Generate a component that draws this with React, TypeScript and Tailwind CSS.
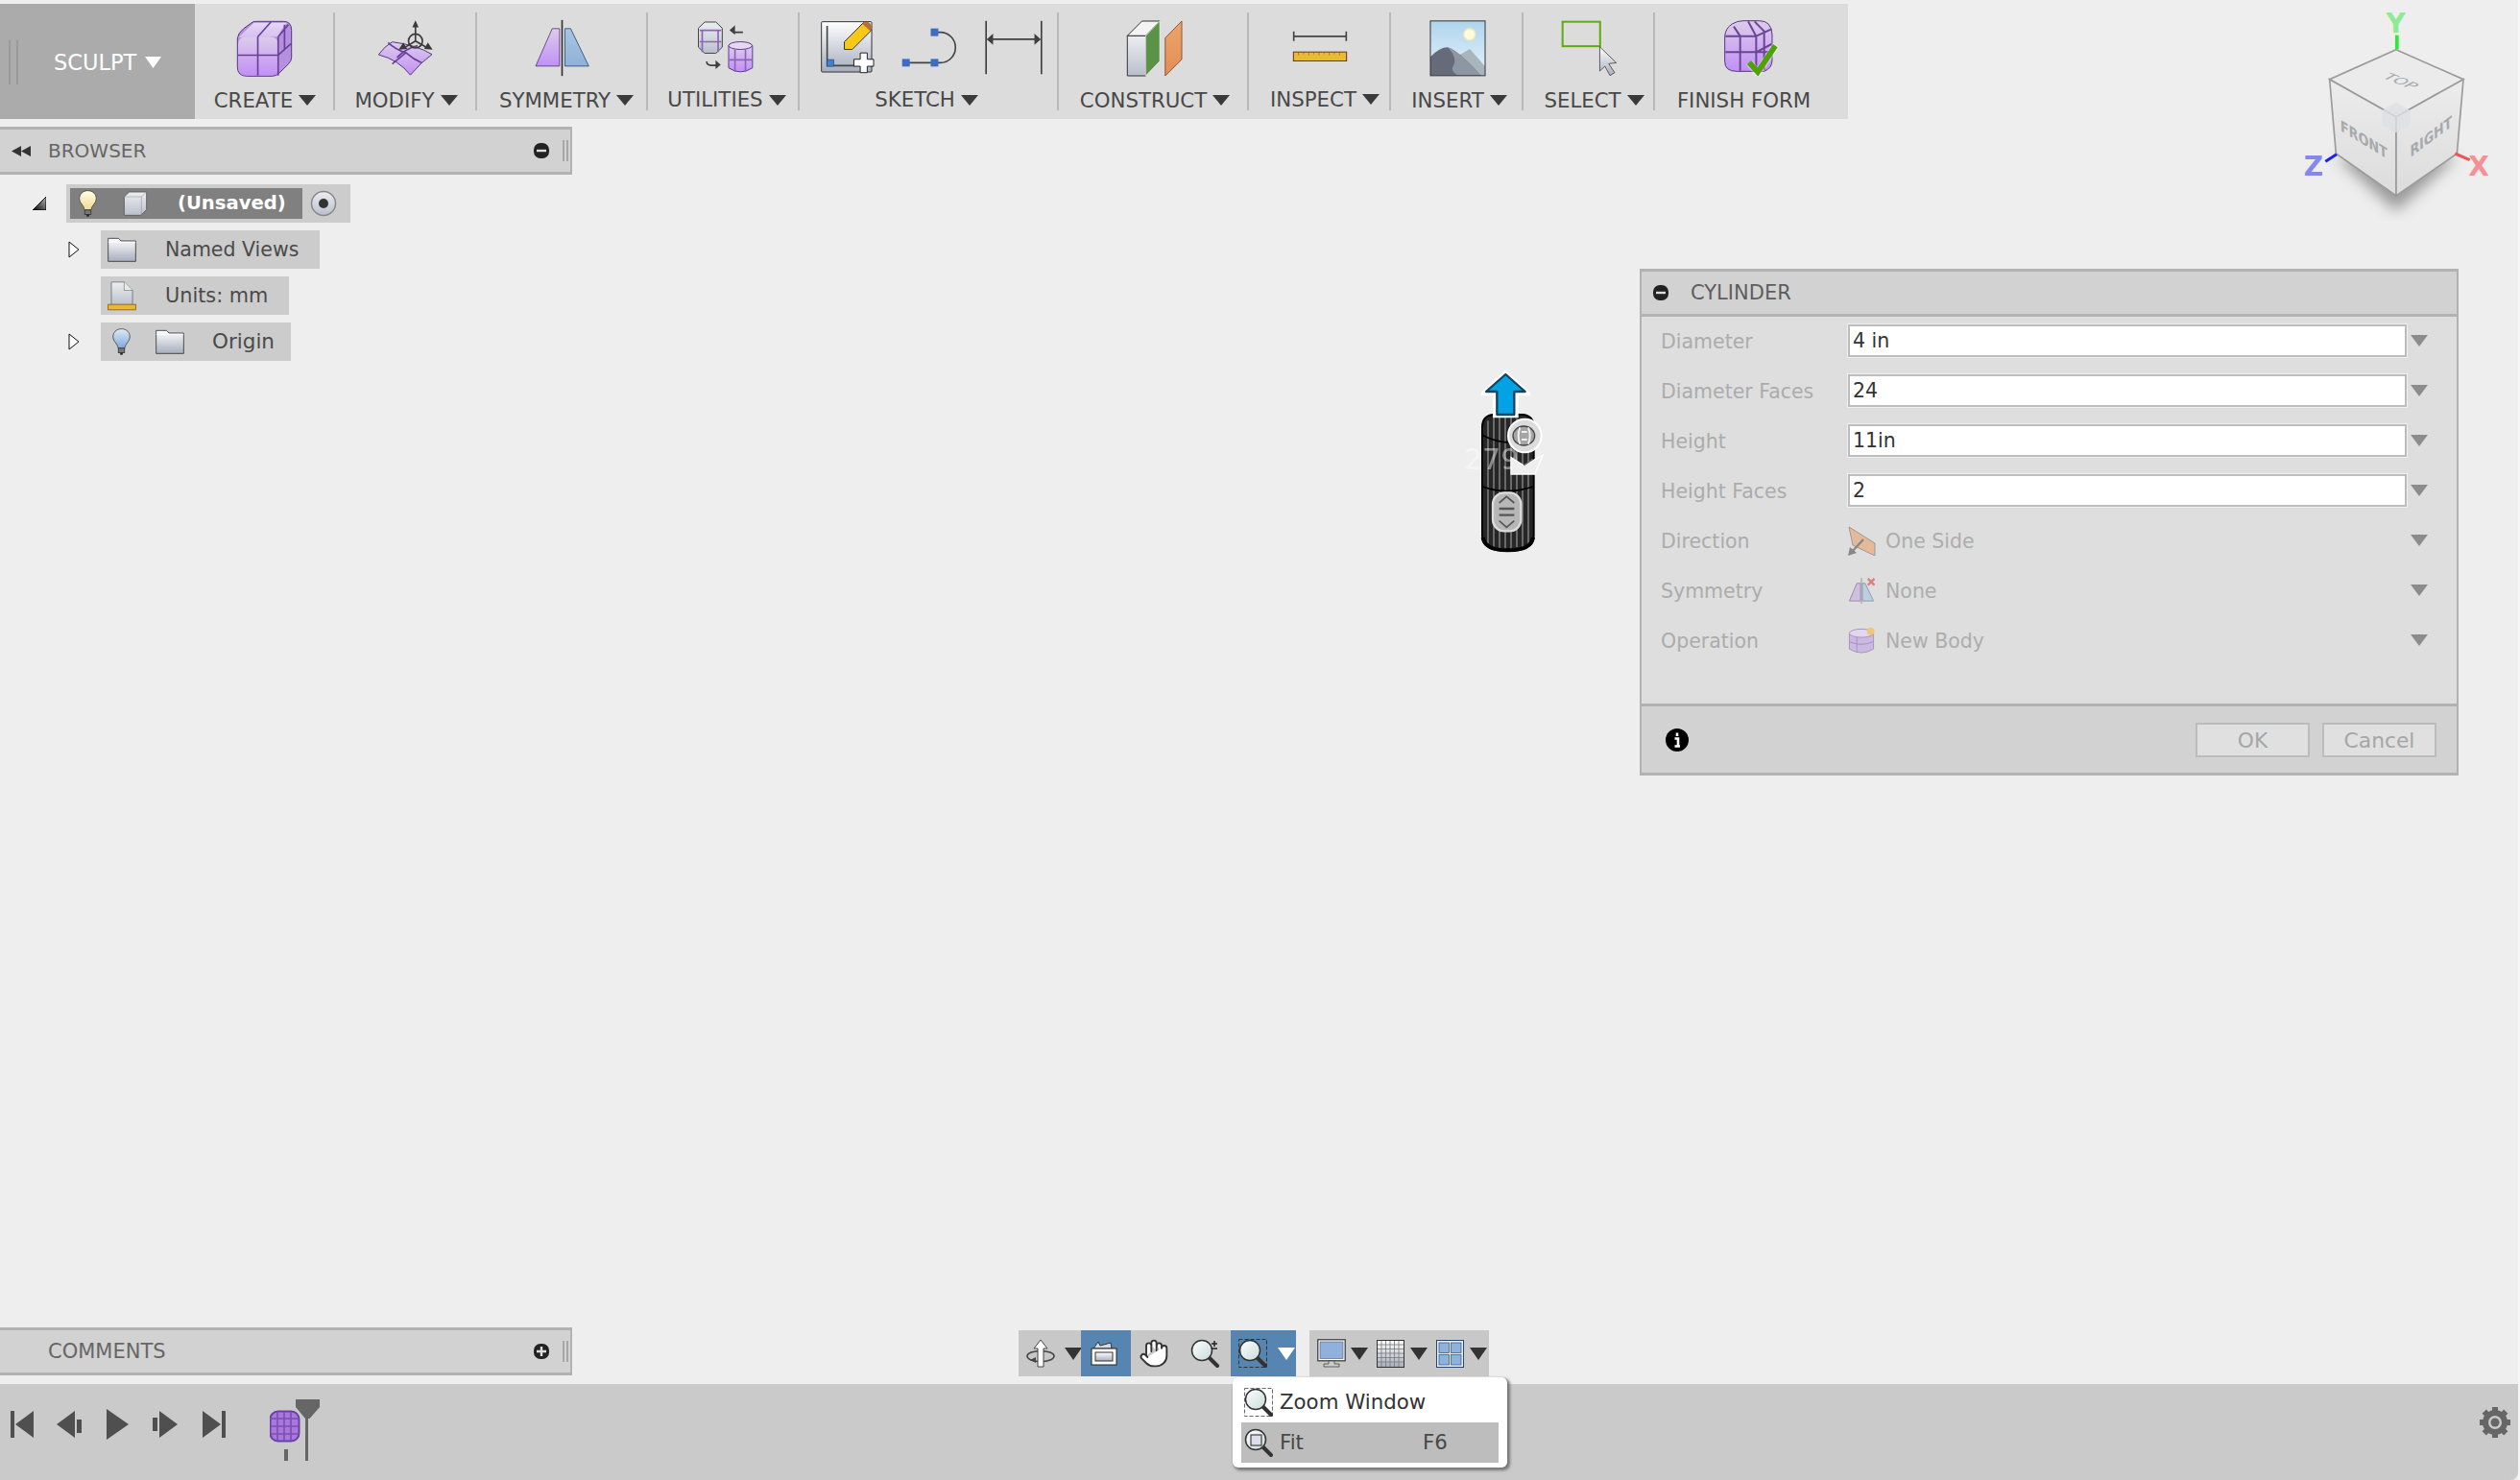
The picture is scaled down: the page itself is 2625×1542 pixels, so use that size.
import React from "react";
import { Hand } from "lucide-react";

const Tri = ({ c = "#3a3a3a", w = 18, h = 11 }: { c?: string; w?: number; h?: number }) => (
  <svg width={w} height={h} viewBox={`0 0 ${w} ${h}`} className="shrink-0">
    <path d={`M0 0H${w}L${w / 2} ${h}Z`} fill={c} />
  </svg>
);

const Ic = ({ vb, w, h, children, className }: { vb: string; w: number; h: number; children: React.ReactNode; className?: string }) => (
  <svg viewBox={vb} width={w} height={h} className={"shrink-0 " + (className ?? "")}>
    {children}
  </svg>
);

const Defs = () => (
  <svg className="absolute w-0 h-0">
    <defs>
      <linearGradient id="lil" x1="0" y1="0" x2="0" y2="1"><stop offset="0" stopColor="#dccdea" /><stop offset="1" stopColor="#c28ff6" /></linearGradient>
      <linearGradient id="lilTop" x1="0" y1="0" x2="0" y2="1"><stop offset="0" stopColor="#e5d8f5" /><stop offset="1" stopColor="#d5bff0" /></linearGradient>
      <linearGradient id="blu" x1="0" y1="0" x2="0" y2="1"><stop offset="0" stopColor="#a9c4e2" /><stop offset="1" stopColor="#8fb1d8" /></linearGradient>
      <linearGradient id="sil" x1="0" y1="0" x2="0" y2="1"><stop offset="0" stopColor="#ffffff" /><stop offset="1" stopColor="#a6adbd" /></linearGradient>
      <linearGradient id="sil2" x1="0" y1="0" x2="0" y2="1"><stop offset="0" stopColor="#eceef1" /><stop offset="1" stopColor="#b9bfcb" /></linearGradient>
      <linearGradient id="sky" x1="0" y1="0" x2="0" y2="1"><stop offset="0" stopColor="#aed5ee" /><stop offset="1" stopColor="#e6f2f9" /></linearGradient>
      <linearGradient id="org" x1="0" y1="0" x2="0" y2="1"><stop offset="0" stopColor="#eba56c" /><stop offset="1" stopColor="#e28f55" /></linearGradient>
      <linearGradient id="yb" x1="0" y1="0" x2="0" y2="1"><stop offset="0" stopColor="#fffde9" /><stop offset="1" stopColor="#f3d98e" /></linearGradient>
      <linearGradient id="bb" x1="0" y1="0" x2="0" y2="1"><stop offset="0" stopColor="#dfeaf7" /><stop offset="1" stopColor="#7ea9da" /></linearGradient>
      <linearGradient id="glass" x1="0" y1="0" x2="1" y2="1"><stop offset="0" stopColor="#ffffff" /><stop offset="1" stopColor="#c5dcd8" /></linearGradient>
      <linearGradient id="open" x1="0" y1="1" x2="1" y2="0"><stop offset="0" stopColor="#000000" /><stop offset="1" stopColor="#bbbbbb" /></linearGradient>
      <linearGradient id="cubeL" x1="0" y1="0" x2="0" y2="1"><stop offset="0" stopColor="#ececec" /><stop offset="1" stopColor="#dcdcdc" /></linearGradient>
      <filter id="blur" x="-40%" y="-60%" width="180%" height="220%"><feGaussianBlur stdDeviation="22" /></filter>
    </defs>
  </svg>
);

const CreateIcon = () => (
  <Ic vb="136 48 178 178" w={59} h={59}>
    <path d="M140 105Q142 88 160 74L188 54Q192 52 202 52H285Q310 52 310 80V165Q310 176 300 186L272 214Q262 224 250 224H170Q140 224 140 195Z" fill="#b58fe0" stroke="#54367f" strokeWidth="3" />
    <path d="M143 102L192 56H296Q274 80 268 100Z" fill="url(#lilTop)" />
    <path d="M142 125Q142 100 170 100H240Q268 100 268 125V195Q268 222 240 222H170Q142 222 142 195Z" fill="url(#lil)" />
    <path d="M204 100V222M142 158H268M204 100L245 54M268 158L308 122M268 100L300 62M268 100V222M288 62V140" stroke="#6a3f98" strokeWidth="5" fill="none" />
  </Ic>
);

const ModifyIcon = () => (
  <Ic vb="578 45 178 180" w={59} h={60}>
    <path d="M582 156Q600 130 625 116Q700 125 750 155Q715 180 682 220Q645 172 582 156Z" fill="url(#lil)" stroke="#54367f" strokeWidth="3" />
    <path d="M612 118Q635 140 668 150Q690 170 718 182M705 128Q670 135 640 165M668 150L625 185" stroke="#6a3f98" strokeWidth="5" fill="none" />
    <circle cx="698" cy="113" r="22" fill="none" stroke="#3a3a3a" strokeWidth="5" />
    <path d="M698 113V65M698 113L665 133M698 113L732 133" stroke="#3a3a3a" strokeWidth="5" />
    <path d="M698 48L688 70H708ZM645 140L672 138L660 118ZM752 140L725 138L737 118Z" fill="#3a3a3a" />
  </Ic>
);

const SymmetryIcon = () => (
  <Ic vb="1075 48 172 180" w={57} h={60}>
    <path d="M1078 195L1130 77H1153V195Z" fill="url(#lil)" stroke="#54367f" strokeWidth="2.5" />
    <path d="M1170 77H1188L1245 195H1170Z" fill="url(#blu)" stroke="#2a4a70" strokeWidth="2.5" />
    <path d="M1161 50V226" stroke="#333" strokeWidth="5" />
  </Ic>
);

const UtilitiesIcon = () => (
  <Ic vb="76 50 180 172" w={60} h={57}>
    <path d="M80 75L100 56H135L155 75V135L135 154H100L80 135Z" fill="url(#sil2)" stroke="#444" strokeWidth="3" />
    <path d="M92 80V150M142 80V150M84 82H152M84 118H152" stroke="#8d63bd" strokeWidth="5" fill="none" />
    <path d="M175 130V200Q212 225 250 200V130Z" fill="url(#lil)" stroke="#5a3a8a" strokeWidth="3" />
    <ellipse cx="212" cy="130" rx="37" ry="12" fill="#e6d8f4" stroke="#5a3a8a" strokeWidth="3" />
    <path d="M195 143V212M228 143V212M176 175H250" stroke="#8d63bd" strokeWidth="5" fill="none" />
    <path d="M220 88H195Q188 88 188 78" stroke="#3f3f3f" strokeWidth="5" fill="none" />
    <path d="M178 82L195 66V96Z" fill="#3f3f3f" />
    <path d="M106 180Q106 192 120 192H136" stroke="#3f3f3f" strokeWidth="5" fill="none" />
    <path d="M150 190L134 176V204Z" fill="#3f3f3f" />
  </Ic>
);

const SketchNew = () => (
  <Ic vb="465 58 175 170" w={58} h={57}>
    <rect x="470" y="62" width="158" height="158" rx="3" fill="url(#sil)" stroke="#333" strokeWidth="3" />
    <path d="M488 75V200H575" stroke="#444" strokeWidth="5" fill="none" />
    <rect x="488" y="181" width="21" height="21" fill="#3c82d4" stroke="#2a4a70" strokeWidth="2" />
    <path d="M542 125L603 64L628 88L567 149H542Z" fill="#f8c818" stroke="#333" strokeWidth="3" />
    <path d="M598 68Q610 58 622 66Q632 76 624 92Z" fill="#b06f3c" />
    <path d="M592 160H614V180H634V202H614V222H592V202H572V180H592Z" fill="#fff" stroke="#222" strokeWidth="3" />
  </Ic>
);
const SketchLine = () => (
  <Ic vb="718 76 178 124" w={59} h={41}>
    <path d="M732 186H840A47 47 0 0 0 840 90H822" stroke="#444" strokeWidth="5" fill="none" />
    <rect x="720" y="174" width="24" height="24" fill="#3a6cc8" />
    <rect x="810" y="174" width="24" height="24" fill="#3a6cc8" />
    <rect x="810" y="78" width="24" height="24" fill="#3a6cc8" />
  </Ic>
);
const SketchDim = () => (
  <Ic vb="972 52 186 172" w={62} h={57}>
    <path d="M978 54V222M1152 54V222M995 112H1135" stroke="#404040" strokeWidth="5" fill="none" />
    <path d="M980 112L1000 94V130ZM1150 112L1130 94V130Z" fill="#404040" />
  </Ic>
);
const ConstructIcon = () => (
  <Ic vb="1420 50 178 176" w={59} h={59}>
    <path d="M1424 98H1482V224H1424Z" fill="url(#sil2)" stroke="#333" strokeWidth="3" />
    <path d="M1424 98L1470 52H1526L1482 98Z" fill="#f4f4f4" stroke="#333" strokeWidth="3" />
    <path d="M1482 98L1526 52V178L1482 224Z" fill="#5a9248" stroke="#fff" strokeWidth="2" />
    <path d="M1543 105L1595 52V172L1543 224Z" fill="url(#org)" stroke="#7c4320" strokeWidth="2.5" />
  </Ic>
);
const InspectIcon = () => (
  <Ic vb="438 88 174 98" w={58} h={33}>
    <path d="M443 90V120M607 90V120M443 105H607" stroke="#444" strokeWidth="5" fill="none" />
    <rect x="442" y="154" width="166" height="28" fill="#e8bc2e" stroke="#6e2e12" strokeWidth="3" />
    <path d="M458 155V164M474 155V161M490 155V164M506 155V161M522 155V164M538 155V161M554 155V164M570 155V161M586 155V164" stroke="#8a6420" strokeWidth="2" />
  </Ic>
);
const InsertIcon = () => (
  <Ic vb="868 50 178 177" w={59} h={59}>
    <rect x="871" y="52" width="172" height="172" fill="url(#sky)" />
    <circle cx="994" cy="94" r="18" fill="#fffbe0" stroke="#f6e9ad" strokeWidth="4" />
    <path d="M960 160L995 140L1043 195V224H1000Z" fill="#a9b5bd" />
    <path d="M871 165Q900 135 925 135Q960 145 1030 224H871Z" fill="#656b78" />
    <path d="M925 135Q960 145 1030 224H960Q930 210 945 190Q955 165 925 135Z" fill="#8f96a3" />
    <rect x="871" y="52" width="172" height="172" fill="none" stroke="#333" strokeWidth="3" />
  </Ic>
);
const SelectIcon = () => (
  <Ic vb="1282 50 178 178" w={59} h={59}>
    <rect x="1287" y="55" width="118" height="77" fill="none" stroke="#5caa0c" strokeWidth="6" />
    <path d="M1404 134L1456 184L1432 187L1451 215L1436 224L1420 195L1404 210Z" fill="url(#sil)" stroke="#444" strokeWidth="2.5" />
  </Ic>
);
const FinishIcon = () => (
  <Ic vb="0 0 171 174" w={57} h={58}>
    <path d="M2 50Q4 25 25 12Q40 2 60 2H110Q148 2 150 45V125Q150 150 125 160H40Q2 160 2 130Z" fill="url(#lil)" stroke="#54367f" strokeWidth="3" />
    <path d="M4 50H100V158M50 50V158M4 100H148M30 20L50 50M75 4L100 50M100 50L148 28M100 100L148 75M95 4L125 35V155" stroke="#6a4596" strokeWidth="6" fill="none" />
    <path d="M78 132L105 165L162 78" stroke="#fff" strokeWidth="24" fill="none" opacity="0.35" />
    <path d="M78 132L105 162L160 80" stroke="#4ea300" strokeWidth="17" fill="none" />
  </Ic>
);

const groups: { w: string; label: string; icon: React.ReactNode; sh: string; ish?: string }[] = [
  { w: "w-[146px]", label: "CREATE", icon: <CreateIcon />, sh: "ml-[2px]" },
  { w: "w-[148px]", label: "MODIFY", icon: <ModifyIcon />, sh: "ml-[2px]" },
  { w: "w-[178px]", label: "SYMMETRY", icon: <SymmetryIcon />, sh: "ml-[10px]" },
  { w: "w-[158px]", label: "UTILITIES", icon: <UtilitiesIcon />, sh: "ml-[8px]", ish: "ml-[6px]" },
  { w: "w-[270px]", label: "SKETCH", icon: <div className="flex items-center gap-[27px]"><SketchNew /><SketchLine /><SketchDim /></div>, sh: "mr-[4px]", ish: "ml-[6px]" },
  { w: "w-[198px]", label: "CONSTRUCT", icon: <ConstructIcon />, sh: "ml-[4px]", ish: "ml-[2px]" },
  { w: "w-[148px]", label: "INSPECT", icon: <InspectIcon />, sh: "ml-[12px]", ish: "ml-[2px]" },
  { w: "w-[138px]", label: "INSERT", icon: <InsertIcon />, sh: "ml-[6px]", ish: "ml-[2px]" },
  { w: "w-[137px]", label: "SELECT", icon: <SelectIcon />, sh: "ml-[12px]", ish: "ml-[2px]" },
];

const Toolbar = () => (
  <div className="mt-1 flex h-[120px] w-[1925px] bg-[#dcdcdc]">
    <div className="flex w-[203px] shrink-0 items-center bg-[#ababab]">
      <div className="ml-[9px] mt-[2px] h-[46px] w-[10px] border-x-2 border-[#999999]" />
      <span className="ml-[37px] mt-[2px] text-[22.5px] leading-none text-white">SCULPT</span>
      <div className="ml-[9px] mt-[2px]"><Tri c="#ffffff" w={17} h={12} /></div>
    </div>
    {groups.map((g) => (
      <div key={g.label} className={`${g.w} mt-[9px] flex h-[102px] shrink-0 flex-col items-center border-r-2 border-[#b9b9b9] pt-2`}>
        <div className={`${g.ish ?? ""} flex h-[58px] items-center`}>{g.icon}</div>
        <div className={`${g.sh} mt-[15px] flex h-6 items-center gap-[6px] text-[21.3px] leading-none text-[#484848]`}>
          <span>{g.label}</span>
          <Tri />
        </div>
      </div>
    ))}
    <div className="mt-[9px] flex h-[102px] flex-1 flex-col items-center pt-2">
      <div className="flex h-[58px] items-center"><FinishIcon /></div>
      <div className="mr-[16px] mt-[15px] flex h-6 items-center text-[21.3px] leading-none text-[#484848]">FINISH FORM</div>
    </div>
  </div>
);

const Pill = ({ plus }: { plus?: boolean }) => (
  <svg width="16" height="16" viewBox="0 0 16 16" className="shrink-0">
    <rect x="0" y="0" width="16" height="16" rx="7" fill="#222" />
    <path d={plus ? "M3 8H13M8 3V13" : "M3 8H13"} stroke="#ddd" strokeWidth="2.4" />
  </svg>
);

const Grip = () => <div className="h-[22px] w-[6px] border-x-2 border-[#a8a8a8]" />;

const PanelHeader = ({ title, left, plus, size }: { title: string; left?: boolean; plus?: boolean; size: string }) => (
  <div className="flex h-[50px] w-[596px] items-center border-y-[3px] border-r-2 border-[#b2b2b2] bg-[#d2d2d2]">
    <div className="flex w-[50px] shrink-0 justify-center pr-[6px]">
      {left && (
        <svg width="20" height="11" viewBox="0 0 20 11"><path d="M0 5.5L10 0V11ZM10 5.5L20 0V11Z" fill="#333" /></svg>
      )}
    </div>
    <span className={`${size} leading-none text-[#666666]`}>{title}</span>
    <div className="ml-auto flex items-center gap-[14px] pr-[2px]">
      <Pill plus={plus} />
      <Grip />
    </div>
  </div>
);

const Bulb = ({ id }: { id: string }) => (
  <Ic vb="3 0 54 86" w={19} h={28}>
    <path d="M30 2C13 2 3 14 3 28C3 42 17 48 20 64H40C43 48 57 42 57 28C57 14 47 2 30 2Z" fill={`url(#${id})`} stroke="#444" strokeWidth="2.5" />
    <rect x="20" y="64" width="20" height="14" fill="#777" stroke="#333" strokeWidth="2.5" />
    <rect x="26" y="78" width="8" height="7" fill="#222" />
  </Ic>
);
const TreeCube = () => (
  <Ic vb="0 0 78 78" w={26} h={26}>
    <path d="M4 20Q4 18 6 16L20 3H74V58L58 74Q56 76 54 76H6Q4 76 4 74Z" fill="url(#sil2)" stroke="#555" strokeWidth="2.5" />
    <path d="M4 18H58V75M58 18L74 3" stroke="#888" strokeWidth="1.5" fill="none" />
  </Ic>
);
const Folder = () => (
  <Ic vb="0 0 90 78" w={30} h={26}>
    <path d="M2 76V4H34L42 12H88V76Z" fill="url(#sil)" stroke="#333" strokeWidth="2.5" />
    <path d="M2 16H88" stroke="#fff" strokeWidth="2" />
  </Ic>
);
const PageIcon = () => (
  <Ic vb="0 0 90 92" w={30} h={31}>
    <path d="M12 2H52L78 28V76H12Z" fill="url(#sil2)" stroke="#555" strokeWidth="2" />
    <path d="M52 2V28H78" fill="#e8e8e8" stroke="#777" strokeWidth="2" />
    <rect x="2" y="72" width="86" height="17" fill="#e9b732" stroke="#8a5a10" strokeWidth="2.5" />
  </Ic>
);
const Disc = () => (
  <Ic vb="0 0 36 54" w={12} h={18}>
    <path d="M3 3L33 27L3 51Z" fill="#fff" stroke="#111" strokeWidth="3" />
  </Ic>
);

const Row = ({ w, children }: { w: string; children: React.ReactNode }) => (
  <div className={`${w} flex h-10 items-center bg-[#cccccc] leading-none text-[#4a4a4a]`}>{children}</div>
);

const Browser = () => (
  <div>
    <PanelHeader title="BROWSER" left size="text-[20px]" />
    <div className="mt-[10px] flex flex-col gap-2">
      <div className="flex items-center">
        <div className="flex w-[69px] justify-end pr-[21px]">
          <svg width="14" height="14" viewBox="0 0 14 14"><path d="M0 14H14V0Z" fill="url(#open)" stroke="#000" strokeWidth="1" /></svg>
        </div>
        <div className="flex h-10 w-[296px] items-center bg-[#cccccc] pl-1">
          <div className="flex h-8 w-[242px] items-center bg-[#808080] pl-[9px]">
            <Bulb id="yb" />
            <div className="ml-[27px]"><TreeCube /></div>
            <span className="ml-[31px] text-[19.6px] font-bold leading-none text-white">(Unsaved)</span>
          </div>
          <svg width="28" height="28" viewBox="0 0 28 28" className="ml-2">
            <circle cx="14" cy="14" r="12.5" fill="url(#sil2)" stroke="#888" strokeWidth="1.5" />
            <circle cx="14" cy="14" r="5" fill="#333" />
          </svg>
        </div>
      </div>
      <div className="flex items-center">
        <div className="flex w-[105px] pl-[71px]"><Disc /></div>
        <Row w="w-[228px]">
          <div className="ml-[7px]"><Folder /></div>
          <span className="ml-[30px] text-[20.5px]">Named Views</span>
        </Row>
      </div>
      <div className="flex items-center">
        <div className="w-[105px]" />
        <Row w="w-[196px]">
          <div className="ml-[7px]"><PageIcon /></div>
          <span className="ml-[30px] text-[20.8px]">Units: mm</span>
        </Row>
      </div>
      <div className="flex items-center">
        <div className="flex w-[105px] pl-[71px]"><Disc /></div>
        <Row w="w-[198px]">
          <div className="ml-3"><Bulb id="bb" /></div>
          <div className="ml-[26px]"><Folder /></div>
          <span className="ml-[29px] text-[21.5px]">Origin</span>
        </Row>
      </div>
    </div>
  </div>
);

const Lens = ({ inner }: { inner?: React.ReactNode }) => (
  <>
    <path d="M19 19L28 28" stroke="#333" strokeWidth="4" strokeLinecap="round" />
    <circle cx="12" cy="12" r="10.5" fill="url(#glass)" stroke="#333" strokeWidth="1.5" />
    {inner}
  </>
);

const NavTri = ({ white }: { white?: boolean }) => <Tri c={white ? "#ffffff" : "#333333"} w={18} h={13} />;

const ZoomMenu = () => (
  <div className="absolute left-[223px] top-[49px] z-10 h-[94px] w-[286px] rounded-[6px] bg-white px-[9px] pt-[5px] text-[21.3px] leading-none shadow-[2px_2px_3px_1px_#777777]">
    <div className="flex h-[42px] items-center text-[#333333]">
      <Ic vb="0 0 30 30" w={30} h={30} className="ml-[3px]">
        <rect x="0.5" y="0.5" width="29" height="29" fill="none" stroke="#666" strokeDasharray="4 2" />
        <Lens />
      </Ic>
      <span className="ml-[7px]">Zoom Window</span>
    </div>
    <div className="flex h-[42px] items-center bg-[#bdbdbd] text-[#484848]">
      <Ic vb="0 0 30 30" w={30} h={30} className="ml-[3px]">
        <Lens inner={<rect x="7" y="7" width="11" height="11" fill="#dde" stroke="#444" strokeWidth="1.2" />} />
      </Ic>
      <span className="ml-[7px]">Fit</span>
      <span className="ml-[124px]">F6</span>
    </div>
  </div>
);

const NavBar = () => (
  <div className="relative ml-[465px] flex items-stretch gap-[14px]">
    <div className="flex h-12 w-[289px] bg-[#c8c8c8]">
      <div className="flex w-[65px] items-center pl-2">
        <Ic vb="0 0 30 30" w={30} h={30}>
          <ellipse cx="15" cy="18" rx="14" ry="5.5" fill="none" stroke="#444" strokeWidth="1.6" />
          <path d="M15 1L22 10H18V29H12V10H8Z" fill="#fff" stroke="#444" strokeWidth="1" />
          <path d="M4 22L10 19V25Z" fill="#444" />
        </Ic>
        <div className="ml-[10px]"><NavTri /></div>
      </div>
      <div className="flex w-[52px] items-center justify-center bg-[#5585b0]">
        <Ic vb="0 0 28 26" w={28} h={26} className="mr-[4px]">
          <path d="M3 8L8 1L10 5L21 2L22 8Z" fill="#d7dbe2" stroke="#333" strokeWidth="1" />
          <rect x="1" y="8" width="26" height="17" fill="#fff" stroke="#222" strokeWidth="1" />
          <rect x="5" y="12" width="18" height="9" fill="url(#sil)" stroke="#333" strokeWidth="1" />
        </Ic>
      </div>
      <div className="flex w-[52px] items-center justify-center pr-1">
        <Hand size={32} fill="#ffffff" stroke="#333333" strokeWidth={1.4} />
      </div>
      <div className="flex w-[52px] items-center justify-center">
        <Ic vb="0 0 32 30" w={32} h={30}>
          <Lens />
          <path d="M25 2V8M22 5H28M22 10H28" stroke="#222" strokeWidth="1.5" />
        </Ic>
      </div>
      <div className="flex w-[68px] items-center bg-[#5585b0] pl-2">
        <Ic vb="0 0 30 30" w={30} h={30}>
          <rect x="0.5" y="0.5" width="29" height="29" fill="none" stroke="#333" strokeDasharray="4 2" />
          <Lens />
        </Ic>
        <div className="ml-[11px]"><NavTri white /></div>
      </div>
    </div>
    <div className="flex h-12 w-[187px] items-center bg-[#c8c8c8] pl-2">
      <Ic vb="0 0 30 30" w={30} h={30}>
        <rect x="0.8" y="0.8" width="28.4" height="22" fill="#fff" stroke="#333" strokeWidth="1.2" />
        <rect x="3" y="3" width="24" height="17.5" fill="#8fb1de" stroke="#556" strokeWidth="0.6" />
        <path d="M12 23H18V26H23V29H7V26H12Z" fill="#ccc" stroke="#444" strokeWidth="0.8" />
      </Ic>
      <div className="ml-[5px]"><NavTri /></div>
      <Ic vb="0 0 29 29" w={29} h={29} className="ml-[9px]">
        <rect x="0.5" y="0.5" width="28" height="28" fill="url(#sil)" stroke="#333" />
        <path d="M5 1V28M9.5 1V28M14 1V28M18.5 1V28M23 1V28M1 5H28M1 9.5H28M1 14H28M1 18.5H28M1 23H28" stroke="#777" strokeWidth="0.8" />
      </Ic>
      <div className="ml-[6px]"><NavTri /></div>
      <Ic vb="0 0 29 29" w={29} h={29} className="ml-[9px]">
        <rect x="0.5" y="0.5" width="28" height="28" fill="#e9eef6" stroke="#28456e" />
        <rect x="3" y="3" width="10.5" height="10.5" fill="#8db2de" stroke="#3b5c8c" strokeWidth="0.8" />
        <rect x="15.5" y="3" width="10.5" height="10.5" fill="#8db2de" stroke="#3b5c8c" strokeWidth="0.8" />
        <rect x="3" y="15.5" width="10.5" height="10.5" fill="#8db2de" stroke="#3b5c8c" strokeWidth="0.8" />
        <rect x="15.5" y="15.5" width="10.5" height="10.5" fill="#8db2de" stroke="#3b5c8c" strokeWidth="0.8" />
      </Ic>
      <div className="ml-[6px]"><NavTri /></div>
    </div>
    <ZoomMenu />
  </div>
);

const Caret = () => <Tri c="#8c8c8c" w={18} h={12} />;

const DirIcon = () => (
  <Ic vb="0 0 29 31" w={29} h={31}>
    <path d="M1 1L28 18V31L5 20Z" fill="#e6b999" stroke="#999" strokeWidth="1" />
    <path d="M16 14L3 28" stroke="#888" strokeWidth="2.4" />
    <path d="M0 31L2 22L9 28Z" fill="#888" />
  </Ic>
);
const SymIcon = () => (
  <Ic vb="0 0 29 29" w={29} h={28}>
    <path d="M1 26L9 7H13V26Z" fill="#cfc0e2" stroke="#998aaa" strokeWidth="1" />
    <path d="M15 7H18L27 26H15Z" fill="#bccee0" stroke="#8a9cae" strokeWidth="1" />
    <path d="M14 1V29" stroke="#999" strokeWidth="1" />
    <path d="M21 2L28 9M28 2L21 9" stroke="#d9827a" strokeWidth="2.4" />
  </Ic>
);
const OpIcon = () => (
  <Ic vb="0 0 29 29" w={29} h={28}>
    <path d="M1 7V24Q14 32 27 24V7Z" fill="#ccb9e2" stroke="#a695b8" strokeWidth="1" />
    <ellipse cx="14" cy="7" rx="13" ry="4.5" fill="#e2d7ef" stroke="#a695b8" strokeWidth="1" />
    <path d="M1 16Q14 22 27 16M9 11V28" stroke="#ae97c9" strokeWidth="1.2" fill="none" />
    <circle cx="24" cy="5" r="4" fill="#f0c676" />
  </Ic>
);

const FieldRow = ({ label, value }: { label: string; value: string }) => (
  <div className="flex h-[34px] items-center">
    <span className="w-[215px] shrink-0 pl-[20px] pt-[2px] text-[#acacac]">{label}</span>
    <div className="flex h-full w-[582px] items-center border-2 border-[#bdbdbd] bg-white pl-[3px] text-[#333333] outline outline-1 outline-[#f0f0f0]">{value}</div>
    <div className="ml-[4px]"><Caret /></div>
  </div>
);
const SelRow = ({ label, value, icon }: { label: string; value: string; icon: React.ReactNode }) => (
  <div className="flex h-[34px] items-center">
    <span className="w-[215px] shrink-0 pl-[20px] pt-[2px] text-[#acacac]">{label}</span>
    {icon}
    <span className="ml-[10px] w-[547px] pt-[2px] text-[#adadad]">{value}</span>
    <Caret />
  </div>
);

const Dialog = () => (
  <div className="mt-[156px] flex h-[528px] w-[853px] shrink-0 flex-col self-start border-x-2 border-y-[3px] border-[#b2b2b2] bg-[#dedede] text-[20.5px] leading-none">
    <div className="flex h-[47px] shrink-0 items-center border-b-[3px] border-[#b2b2b2] bg-[#d2d2d2] pl-3">
      <Pill />
      <span className="ml-[23px] text-[21px] text-[#5e5e5e]">CYLINDER</span>
    </div>
    <div className="flex flex-1 flex-col gap-[18px] pt-2">
      <FieldRow label="Diameter" value="4 in" />
      <FieldRow label="Diameter Faces" value="24" />
      <FieldRow label="Height" value="11in" />
      <FieldRow label="Height Faces" value="2" />
      <SelRow label="Direction" value="One Side" icon={<DirIcon />} />
      <SelRow label="Symmetry" value="None" icon={<SymIcon />} />
      <SelRow label="Operation" value="New Body" icon={<OpIcon />} />
    </div>
    <div className="flex h-[72px] shrink-0 items-center border-t-[3px] border-[#b2b2b2] bg-[#d2d2d2] pl-[25px] pr-[21px]">
      <svg width="24" height="24" viewBox="0 0 24 24"><circle cx="12" cy="12" r="12" fill="#000" /><path d="M12 4.5V8M9.5 10.5H13V18M9.5 18.5H15" stroke="#fff" strokeWidth="2.6" fill="none" /></svg>
      <button className="ml-auto h-9 w-[119px] border-2 border-[#bcbcbc] bg-[#e0e0e0] pt-[2px] text-[21.8px] text-[#a6a6a6]">OK</button>
      <button className="ml-[13px] h-9 w-[119px] border-2 border-[#bcbcbc] bg-[#e0e0e0] pt-[2px] text-[21.8px] text-[#a6a6a6]">Cancel</button>
    </div>
  </div>
);

const ViewCube = () => (
  <svg viewBox="0 0 825 690" width="275" height="230" className="absolute right-[-2px] top-0" style={{ fontFamily: "'DejaVu Sans',sans-serif" }}>
    <path d="M250 490L438 660L628 490Z" fill="#8a8a8a" filter="url(#blur)" opacity="0.85" />
    <path d="M438 155L648 248L438 365L230 248Z" fill="#ebebeb" stroke="#9b9b9b" strokeWidth="5" />
    <path d="M230 248L438 365V612L250 480Z" fill="url(#cubeL)" stroke="#9b9b9b" strokeWidth="5" />
    <path d="M648 248L438 365V612L628 480Z" fill="url(#cubeL)" stroke="#9b9b9b" strokeWidth="5" />
    <path d="M438 320L482 345V392L438 415L394 392V345Z" fill="#dfe0e3" opacity="0.8" />
    <text transform="matrix(0.82 0.5 0.03 1 264 408)" fontSize="47" fontWeight="bold" fill="#a7a9ad">FRONT</text>
    <text transform="matrix(0.8 -0.6 0.03 1 482 492)" fontSize="47" fontWeight="bold" fill="#a7a9ad">RIGHT</text>
    <text transform="matrix(0.9 0.36 -0.75 0.4 392 242)" fontSize="52" fill="#a7a9ad">TOP</text>
    <rect x="435" y="110" width="11" height="44" fill="#26ee36" />
    <path d="M217 505L252 482" stroke="#2020ee" strokeWidth="9" />
    <path d="M622 480L668 500" stroke="#ee5555" strokeWidth="9" />
    <text x="437" y="103" textAnchor="middle" fontSize="84" fontWeight="bold" fill="#8cec92">Y</text>
    <text x="180" y="550" textAnchor="middle" fontSize="84" fontWeight="bold" fill="#8486f2">Z</text>
    <text x="696" y="550" textAnchor="middle" fontSize="84" fontWeight="bold" fill="#f59095">X</text>
  </svg>
);

const CylinderObject = () => (
  <svg viewBox="0 0 330 660" width="110" height="220" className="absolute left-[1500px] top-[370px]" style={{ fontFamily: "'DejaVu Sans',sans-serif" }}>
    <path d="M132 225Q132 190 165 186H260Q293 190 293 225V565Q293 612 212 612Q132 612 132 565Z" fill="#262626" stroke="#000" strokeWidth="6" />
    <path d="M150 205V590M168 195V600M186 190V606M204 190V610M222 192V608M240 198V600M258 198V600M276 208V590" stroke="#858585" strokeWidth="5" opacity="0.85" />
    <path d="M132 250Q205 290 293 262M132 410Q205 440 293 410" stroke="#000" strokeWidth="5" fill="none" />
    <path d="M134 570Q140 610 212 610Q285 610 291 570" stroke="#000" strokeWidth="12" fill="none" />
    <text x="75" y="358" fontSize="90" fill="#ffffff" opacity="0.45">279</text>
    <rect x="165" y="430" width="88" height="120" rx="36" fill="#b7b7b7" stroke="#dddddd" strokeWidth="7" />
    <path d="M185 480H232M185 500H232" stroke="#555" strokeWidth="7" />
    <path d="M185 462L208 442L232 462M185 518L208 538L232 518" stroke="#555" strokeWidth="5" fill="none" />
    <circle cx="265" cy="252" r="52" fill="#dcdcdc" stroke="#fff" strokeWidth="6" />
    <ellipse cx="262" cy="252" rx="34" ry="30" fill="#a5a5a5" stroke="#444" strokeWidth="4" />
    <path d="M250 226Q240 252 250 278M276 226Q286 252 276 278M255 240H272M255 264H272" stroke="#eee" strokeWidth="6" fill="none" />
    <path d="M222 320L262 345L322 312L296 372H222V350Z" fill="#eeeeee" stroke="#ffffff" strokeWidth="4" />
    <path d="M262 345L290 325" stroke="#666" strokeWidth="4" />
    <path d="M205 46L282 118V126H245V196H165V126H128V118Z" fill="#ffffff" />
    <path d="M205 60L266 114H232V186H178V114H144Z" fill="#02a2e5" stroke="#17425c" strokeWidth="7" strokeLinejoin="round" />
  </svg>
);

const Timeline = () => (
  <div className="flex h-[100px] items-center rounded-br-[8px] bg-[#cacaca] pl-[11px] pr-2">
    <svg width="24" height="28" viewBox="0 0 24 28" className="mb-4"><path d="M0 0H4V28H0ZM24 0V28L5 14Z" fill="#4f4f4f" /></svg>
    <svg width="26" height="28" viewBox="0 0 26 28" className="mb-4 ml-6"><path d="M19 0V28L0 14ZM21 9H26V23H21Z" fill="#4f4f4f" /></svg>
    <svg width="23" height="32" viewBox="0 0 23 32" className="mb-4 ml-[26px]"><path d="M0 0L23 16L0 32Z" fill="#4f4f4f" /></svg>
    <svg width="26" height="28" viewBox="0 0 26 28" className="mb-4 ml-[25px]"><path d="M7 0L26 14L7 28ZM0 7H5V21H0Z" fill="#4f4f4f" /></svg>
    <svg width="24" height="28" viewBox="0 0 24 28" className="mb-4 ml-[26px]"><path d="M0 0L19 14L0 28ZM20 0H24V28H20Z" fill="#4f4f4f" /></svg>
    <svg width="52" height="64" viewBox="0 0 52 64" className="mb-1 ml-[46px]">
      <rect x="0.5" y="12.5" width="30" height="31" rx="8" fill="#a878dc" stroke="#6a3fa8" strokeWidth="2" />
      <path d="M8 13V43M15 13V43M22 13V43M1 20H30M1 28H30M1 36H30" stroke="#7b4eb5" strokeWidth="1.6" />
      <rect x="15" y="52" width="4" height="12" fill="#666" />
      <path d="M27 0H52V8L41.5 20H40V64H37V20L27 8Z" fill="#666" />
    </svg>
    <svg width="32" height="32" viewBox="0 0 32 32" className="mb-5 ml-auto">
      <path d="M16 16m-10 0a10 10 0 1 0 20 0a10 10 0 1 0 -20 0" fill="none" stroke="#666" strokeWidth="6" />
      <path d="M16 0V5M16 27V32M0 16H5M27 16H32M4.7 4.7L8 8M24 24L27.3 27.3M4.7 27.3L8 24M24 8L27.3 4.7" stroke="#666" strokeWidth="6" />
      <circle cx="16" cy="16" r="4.5" fill="#666" />
    </svg>
  </div>
);

export default function App() {
  return (
    <div className="relative flex h-[1542px] w-[2625px] flex-col overflow-hidden border-r-2 border-[#f6f6f6] bg-[#eeeeee] font-['DejaVu_Sans',sans-serif]">
      <Defs />
      <Toolbar />
      <div className="flex min-h-0 flex-1">
        <div className="flex w-[596px] shrink-0 flex-col justify-between pb-[9px] pt-2">
          <Browser />
          <PanelHeader title="COMMENTS" plus size="text-[21px]" />
        </div>
        <div className="flex w-[1112px] shrink-0 flex-col justify-end pb-2">
          <NavBar />
        </div>
        <Dialog />
      </div>
      <Timeline />
      <ViewCube />
      <CylinderObject />
    </div>
  );
}
